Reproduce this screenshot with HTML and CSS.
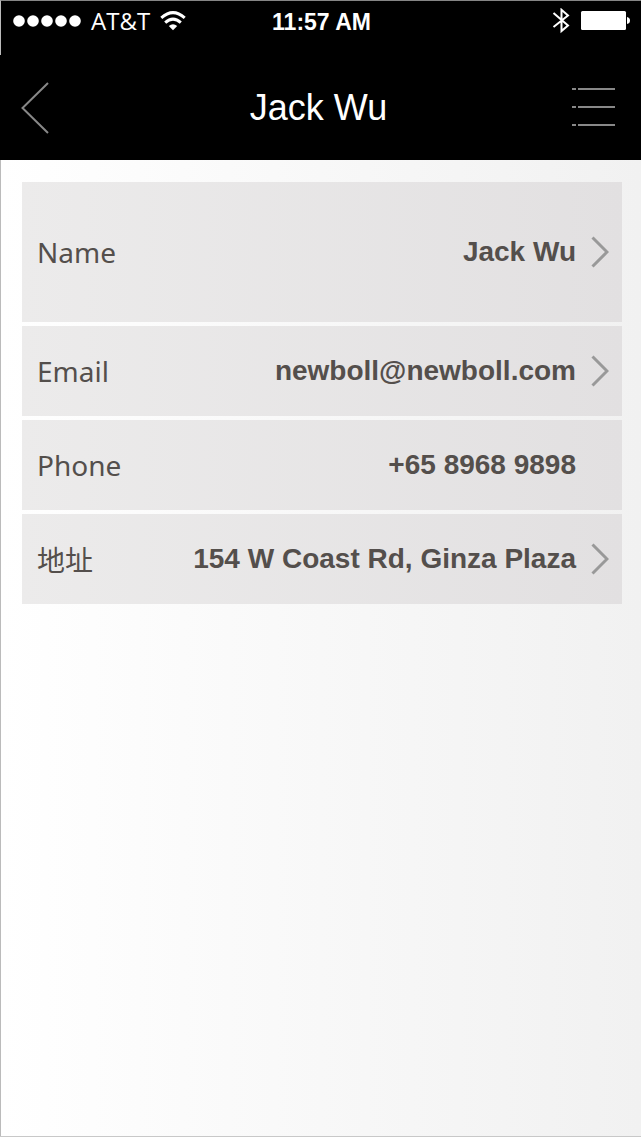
FILE: index.html
```html
<!DOCTYPE html>
<html lang="en">
<head>
<meta charset="utf-8">
<meta name="viewport" content="width=device-width, initial-scale=1">
<title>Jack Wu</title>
<link rel="stylesheet" href="styles.css">
</head>
<body>
<div class="screen">
  <div class="status">
    <div class="carrier">
      <svg class="signal" width="68" height="12" viewBox="0 0 68 12" aria-hidden="true"><circle cx="6" cy="6" r="5.8"/><circle cx="20" cy="6" r="5.8"/><circle cx="34" cy="6" r="5.8"/><circle cx="48" cy="6" r="5.8"/><circle cx="62" cy="6" r="5.8"/></svg>
      <span>AT&amp;T</span>
      <svg width="26" height="20" viewBox="0 0 26 20" aria-hidden="true"><path d="M1.3 6.8Q13-3.6 24.7 6.8M5.2 11.6Q13 4.6 20.8 11.6" fill="none" stroke="#fff" stroke-width="3"/><path d="M8.8 15Q13 11.4 17.2 15L13 19.2z" fill="#fff"/></svg>
    </div>
    <time class="clock">11:57 AM</time>
    <div class="power">
      <svg width="18" height="26" viewBox="0 0 18 26" aria-hidden="true"><path d="M1.5 5 16 17.5 9.5 23V1.8L16 7.5 1.5 19" fill="none" stroke="#fff" stroke-width="2"/></svg>
      <svg width="50" height="20" viewBox="0 0 50 20" aria-hidden="true"><rect x="1" y="0" width="45" height="19" rx="1.5" fill="#fff"/><path d="M47 6Q50 6.500 50 9.500T47 13z" fill="#fff"/></svg>
    </div>
  </div>
  <header class="nav">
    <button class="icon-button" type="button" aria-label="Back">
      <svg width="28" height="52" viewBox="0 0 28 52"><path d="M27 1 1.5 26 27 51" fill="none" stroke="#888" stroke-width="2"/></svg>
    </button>
    <h1 class="title">Jack Wu</h1>
    <button class="icon-button menu" type="button" aria-label="Menu">
      <svg width="46" height="40" viewBox="0 0 46 40"><path d="M2 1H6M8 1H45M2 19H6M8 19H45M2 37H6M8 37H45" fill="none" stroke="#888" stroke-width="2"/></svg>
    </button>
  </header>
  <main class="details">
    <a class="row tall" href="#name">
      <span class="label">Name</span><span class="value">Jack Wu</span>
      <svg class="chevron" viewBox="0 0 18 32" aria-hidden="true"><path d="M1.5 1.5 16 16 1.5 30.5"/></svg>
    </a>
    <a class="row" href="#email">
      <span class="label">Email</span><span class="value">newboll@newboll.com</span>
      <svg class="chevron" viewBox="0 0 18 32" aria-hidden="true"><path d="M1.5 1.5 16 16 1.5 30.5"/></svg>
    </a>
    <div class="row">
      <span class="label">Phone</span><span class="value">+65 8968 9898</span>
    </div>
    <a class="row" href="#address">
      <span class="label" lang="zh">地址</span><span class="value">154 W Coast Rd, Ginza Plaza</span>
      <svg class="chevron" viewBox="0 0 18 32" aria-hidden="true"><path d="M1.5 1.5 16 16 1.5 30.5"/></svg>
    </a>
  </main>
</div>
</body>
</html>
```

FILE: styles.css
```css
* { box-sizing: border-box; }

body {
  margin: 0;
  font-family: "Liberation Sans", Arial, sans-serif;
  color: #544f4c;
}

.screen {
  display: flex;
  flex-direction: column;
  min-height: 100vh;
  border-bottom: 1px solid #c8c8c8;
  background: linear-gradient(to right, #fff, #f1f1f1);
}

.status {
  display: grid;
  grid-template-columns: 1fr auto 1fr;
  align-items: start;
  height: 55px;
  padding: 6px 11px 0 12px;
  border-top: 1px solid #858585;
  border-left: 1px solid #bbb;
  background: #000;
  color: #fff;
}

.carrier,
.power {
  display: flex;
  align-items: center;
  height: 28px;
  gap: 10px;
  font-family: "Open Sans", "Noto Sans", sans-serif;
  font-size: 24px;
  line-height: 28px;
}

.power { justify-content: flex-end; }

.signal { fill: #fff; }

.clock {
  font-size: 23px;
  font-weight: bold;
  line-height: 30px;
}

.nav {
  display: grid;
  grid-template-columns: 1fr auto 1fr;
  align-items: center;
  height: 105px;
  padding: 0 25px 0 21px;
  background: #000;
  color: #fff;
}

.icon-button {
  display: flex;
  justify-self: start;
  padding: 0;
  border: 0;
  background: none;
  cursor: pointer;
}

.menu { justify-self: end; }

.title {
  margin: 0;
  font-size: 36px;
  font-weight: normal;
  line-height: 40px;
}

.details {
  display: flex;
  flex: 1;
  flex-direction: column;
  gap: 4px;
  padding: 22px 19px 22px 21px;
  border-left: 1px solid #bbb;
}

.row {
  display: grid;
  grid-template-columns: auto 1fr 18px;
  align-items: center;
  column-gap: 15px;
  min-height: 90px;
  padding: 0 13px 0 15px;
  background: linear-gradient(to right, #ecebeb, #e2e0e1);
  color: inherit;
  text-decoration: none;
}

.tall { min-height: 140px; }

.label {
  font-family: "Noto Sans", "Open Sans", "Noto Sans CJK SC", sans-serif;
  font-size: 28px;
  line-height: 36px;
}

.label:lang(zh) {
  font-family: "Noto Sans CJK SC", sans-serif;
}

.value {
  font-size: 28px;
  font-weight: bold;
  line-height: 32px;
  text-align: right;
}

.chevron {
  width: 18px;
  height: 32px;
  fill: none;
  stroke: #999;
  stroke-width: 3;
}
```
